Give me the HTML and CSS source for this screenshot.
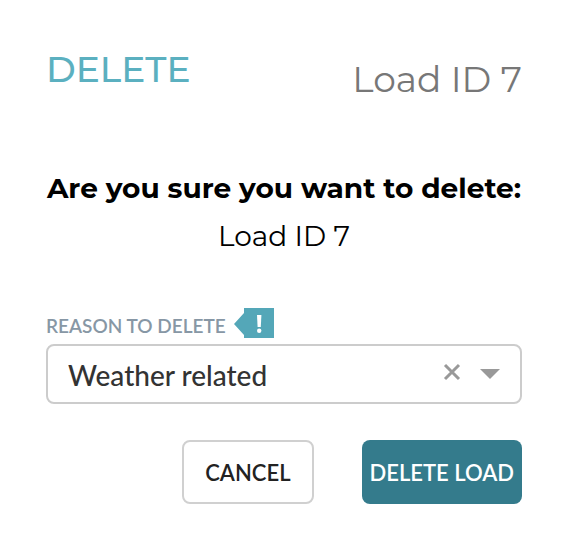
FILE: index.html
```html
<!doctype html>
<html lang="en">
<head>
<meta charset="utf-8">
<meta name="viewport" content="width=device-width,initial-scale=1.0">
<title>Delete Load</title>
<link rel="stylesheet" href="styles.css">
</head>
<body>
	<form class="delete-form">
		<header class="form-header">
			<h1>DELETE</h1>
			<span class="load-id">Load ID 7</span>
		</header>

		<div class="confirm-message">
			<h2>Are you sure you want to delete:</h2>
			<p>Load ID 7</p>
		</div>

		<div class="form-field">
			<div class="label-row">
				<label for="reason">REASON TO DELETE</label>
				<svg class="required-tag" viewBox="0 0 40 30" role="img" aria-label="Required">
					<path d="M0 16 L10 5 V0 H40 V30 H10 V27 Z" fill="#54a7b8"/>
					<path d="M23 7 H27.4 L26.8 19 H23.6 Z" fill="#fff"/>
					<circle cx="25.2" cy="22.8" r="2.2" fill="#fff"/>
				</svg>
			</div>
			<div class="select-box">
				<select id="reason" name="reason">
					<option selected>Weather related</option>
				</select>
				<button type="button" class="clear-btn" aria-label="Clear">
					<svg viewBox="0 0 18 18"><path d="M2 2 L16 16 M16 2 L2 16" stroke="#999" stroke-width="3"/></svg>
				</button>
				<svg class="arrow" viewBox="0 0 20 10"><path d="M0 0 H20 L10 10 Z" fill="#999"/></svg>
			</div>
		</div>

		<div class="form-actions">
			<button type="button" class="btn cancel-btn">CANCEL</button>
			<button type="submit" class="btn delete-btn">DELETE LOAD</button>
		</div>
	</form>
</body>
</html>
```
FILE: styles.css
```css
*{
	box-sizing: border-box;
}
body{
	margin: 0;
	background-color: #fff;
	font-family: Lato, "Liberation Sans", sans-serif;
}
.delete-form{
	padding: 44px 44px 40px 46px;
}
.form-header,
.confirm-message{
	font-family: Montserrat, Inter, sans-serif;
}
.form-header{
	display: flex;
	justify-content: space-between;
	align-items: flex-start;
}
.form-header h1{
	margin: 0;
	font-size: 36px;
	line-height: 50px;
	font-weight: 500;
	color: #5bb0c0;
}
.load-id{
	padding-top: 10px;
	font-size: 36px;
	line-height: 50px;
	color: #777;
}
.confirm-message{
	margin-top: 60px;
	text-align: center;
	color: #000;
}
.confirm-message h2{
	margin: 0;
	font-size: 28px;
	line-height: 48px;
	font-weight: 700;
	white-space: nowrap;
}
.confirm-message p{
	margin: 0;
	font-size: 28px;
	line-height: 48px;
}
.form-field{
	margin-top: 48px;
}
.label-row{
	display: flex;
	align-items: center;
	gap: 8px;
	height: 30px;
	margin-bottom: 6px;
}
.label-row label{
	padding-top: 4px;
	font-size: 19px;
	font-weight: 600;
	color: #8797a5;
}
.required-tag{
	width: 40px;
	height: 30px;
}
.select-box{
	display: flex;
	align-items: center;
	height: 60px;
	padding: 0 20px;
	border: 2px solid #ccc;
	border-radius: 8px;
}
.select-box select{
	flex: 1;
	min-width: 0;
	height: 56px;
	padding: 2px 0 0;
	border: none;
	background: none;
	appearance: none;
	font-family: inherit;
	font-size: 28px;
	font-weight: 500;
	color: #333;
}
.clear-btn{
	display: flex;
	margin: 0 19px 4px 0;
	padding: 0;
	border: none;
	background: none;
	cursor: pointer;
}
.clear-btn svg{
	width: 18px;
	height: 18px;
}
.arrow{
	width: 20px;
	height: 10px;
}
.form-actions{
	display: flex;
	justify-content: flex-end;
	gap: 48px;
	margin-top: 36px;
}
.btn{
	height: 64px;
	border-radius: 8px;
	font-family: inherit;
	font-size: 22px;
	font-weight: 600;
	cursor: pointer;
}
.cancel-btn{
	padding: 0 21px;
	border: 2px solid #d0d0d0;
	background-color: #fff;
	color: #222;
}
.delete-btn{
	padding: 0 8px;
	border: none;
	background-color: #347b8c;
	color: #fff;
}
```
